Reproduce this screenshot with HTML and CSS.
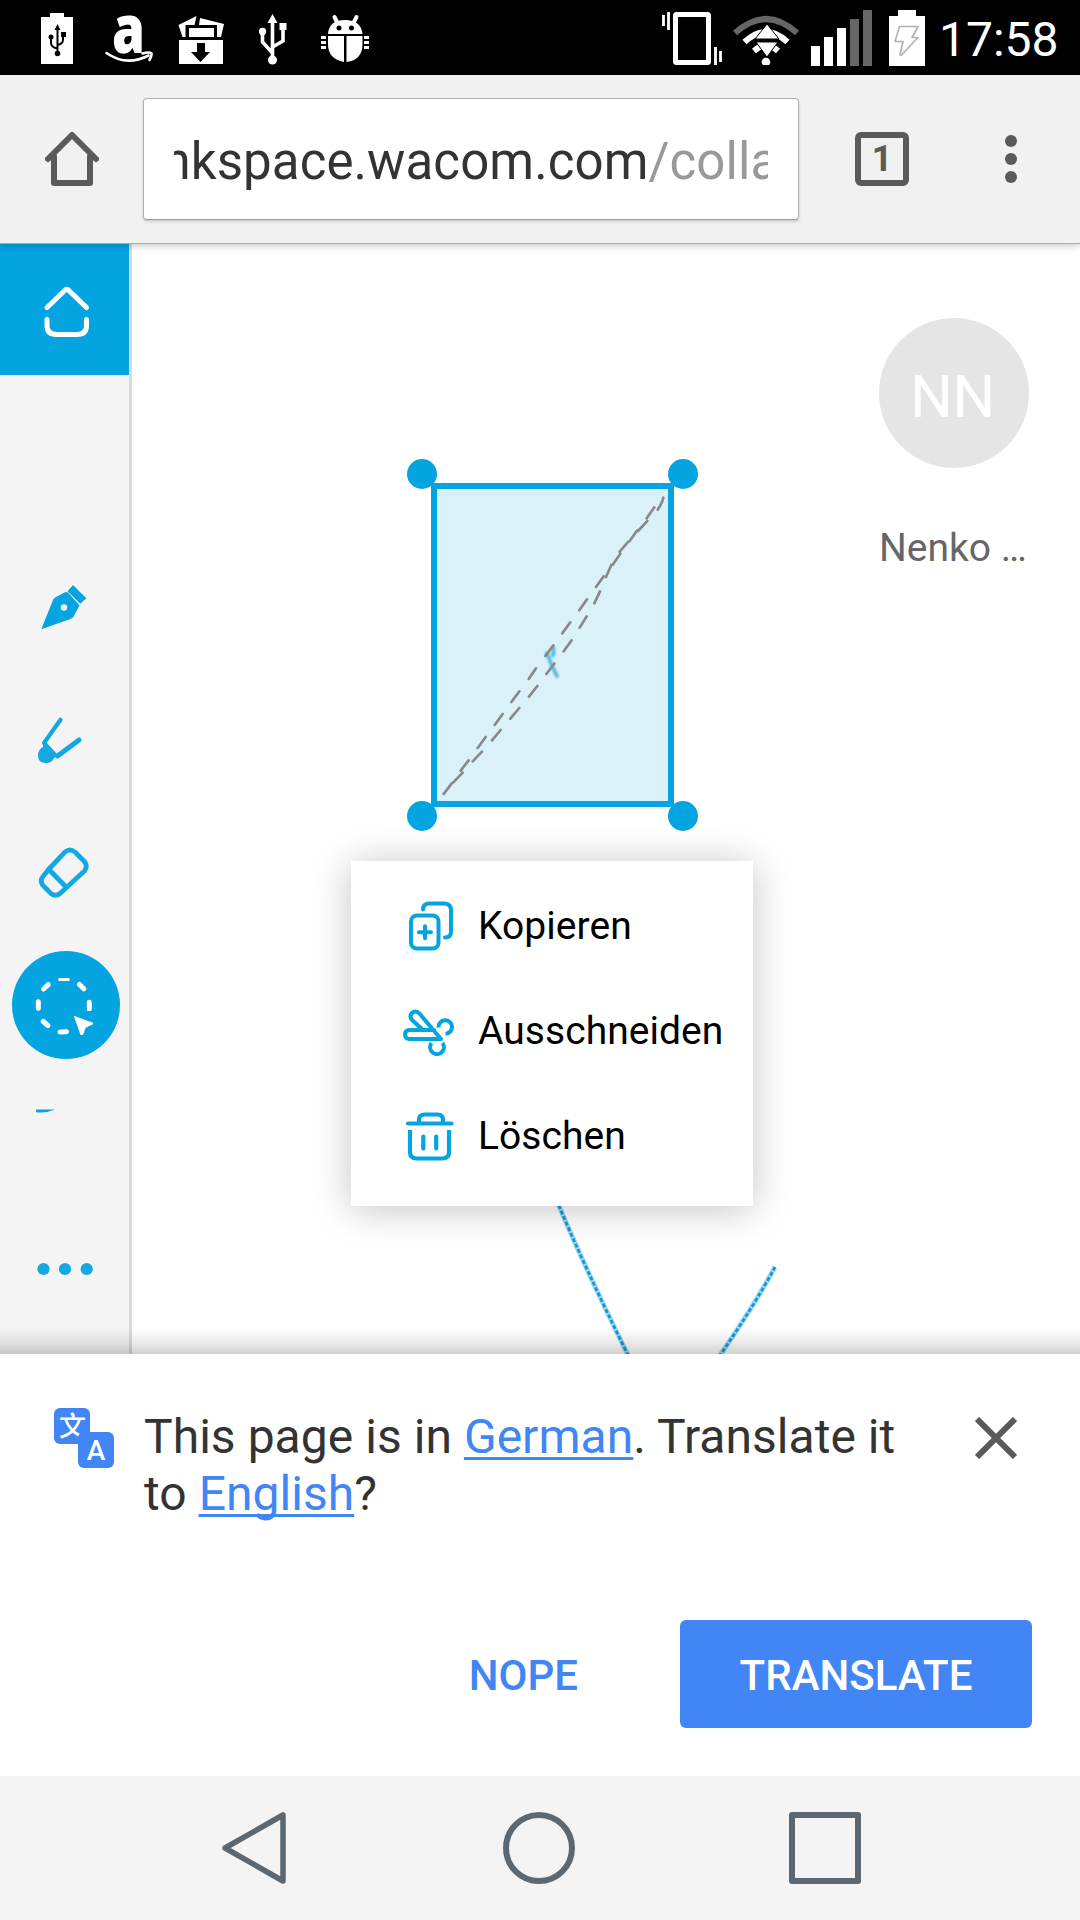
FILE: index.html
```html
<!DOCTYPE html>
<html lang="de">
<head>
<meta charset="utf-8">
<title>Inkspace</title>
<link rel="stylesheet" href="styles.css">
</head>
<body>
<header class="status">
  <div class="status-group notifications">
    <svg width="32" height="54" viewBox="41 10 32 54"><path fill="#fff" d="M41 16h9v-4h14v4h9v47H41z"/><g fill="none" stroke="#000" stroke-width="2"><path d="M57.500 28v24M51 36v6q0 4 6 5.500M63 34v5q0 4-6 5"/></g><path d="M57.500 23l3 6h-6zM61 31h5v5h-5z"/><circle cx="57.500" cy="52.500" r="2.800"/><circle cx="51" cy="36" r="2.500"/></svg>
    <svg width="48" height="54" viewBox="105 10 48 54"><text class="shop-letter" x="112" y="52" textLength="33" lengthAdjust="spacingAndGlyphs">a</text><path fill="none" stroke="#fff" stroke-width="2.600" stroke-linecap="round" d="M106.500 52q20 14 42 2.500M142.500 52.500q7-2 9 0q.5 2-2 6.500"/></svg>
    <svg width="46" height="54" viewBox="178 10 46 54"><path fill="#fff" d="M178.500 24l18-9-2 9h-9v12h-3zM200 17l24 6-3 13h-4V24h-18zM189 27h25v9h-25zM179 39h44v24h-44z"/><path d="M197 42h8v9h5l-9.500 10-9.500-10h6z"/></svg>
    <svg width="28" height="54" viewBox="259 10 28 54"><g fill="none" stroke="#fff" stroke-width="3.600"><path d="M272.500 20v38M262.500 31v10l10 11M283 25v15l-10.500 6"/></g><path fill="#fff" d="M272.500 13l5 9h-10zM279.500 22h7v7h-7z"/><circle cx="262.500" cy="30.500" r="3.700" fill="#fff"/><circle cx="272.500" cy="59" r="4.500" fill="#fff"/></svg>
    <svg width="48" height="54" viewBox="321 10 48 54"><path stroke="#fff" stroke-width="4" stroke-linecap="round" d="M334.500 16l3 6M356.500 16l-3 6"/><path fill="#fff" d="M328 33q1-14 17-14t17.500 14zM328 35h16v26q-16-3-16-18zM346.500 35h16v8q0 16-16 18zM321 35h5v3h-5zM321 40h5v3h-5zM321 45h5v3h-5zM364 35h5v3h-5zM364 40h5v3h-5zM364 45h5v3h-5z"/><circle cx="339" cy="27" r="2.500"/><circle cx="351.500" cy="27" r="2.500"/></svg>
  </div>
  <div class="status-group system">
    <svg width="60" height="54" viewBox="662 10 60 54"><rect x="675.500" y="13.500" width="33" height="48" rx="1" fill="none" stroke="#fff" stroke-width="5"/><path stroke="#fff" stroke-width="2.800" d="M663.500 14v11M668.500 11v18M715.500 46v18M720.500 50v11"/></svg>
    <svg width="68" height="54" viewBox="732 10 68 54"><g fill="none"><path stroke="#666" stroke-width="6" d="M735 32q31-28 62 0"/><path stroke="#fff" stroke-width="6" d="M744.500 41q21.500-20 43 0"/><path stroke="#fff" stroke-width="6" d="M754 50q12-11 24 0"/></g><path fill="#fff" stroke="#000" d="M767 23l12 15h-24zM756 41h22l-11 15z"/><circle cx="766" cy="61" r="4.300" fill="#fff"/></svg>
    <svg width="61" height="56" viewBox="811 9 61 56"><path fill="#fff" d="M811 45h9v20h-9zM824 36h9v29h-9zM837 27h9v38h-9z"/><path fill="#666" d="M850 18h9v47h-9zM863 9h9v56h-9z"/></svg>
    <svg width="36" height="56" viewBox="889 9 36 56"><path fill="#fff" d="M889 15h9V9h18v6h9v50h-36z"/><path fill="none" stroke="#b0b0b0" stroke-width="1.600" stroke-linejoin="round" d="M899.500 25.500h18.500l-6 11h6l-17 18-1-1 3-13h-8z"/></svg>
    <span class="clock">17:58</span>
  </div>
</header>

<nav class="toolbar">
  <svg width="54" height="54" viewBox="45 132 54 54"><g fill="none" stroke="#5a5a5a" stroke-width="6" stroke-linecap="round" stroke-linejoin="round"><path d="M48 159L72 135l24 24"/><path stroke-linecap="butt" d="M54 155v28h36v-28"/></g></svg>
  <div class="omnibox"><div class="url"><span class="url-text">inkspace.wacom.com<span class="path">/collaboration</span></span></div></div>
  <div class="tabs">1</div>
  <svg class="more" width="12" height="48" viewBox="1005 135 12 48" fill="#5a5a5a"><circle cx="1011" cy="141" r="6"/><circle cx="1011" cy="159" r="6"/><circle cx="1011" cy="177" r="6"/></svg>
</nav>

<main class="page">
  <aside class="tools">
    <svg class="tool home" viewBox="0 243 129 132"><g fill="none" stroke="#fff" stroke-width="5" stroke-linecap="round" stroke-linejoin="round"><path d="M47 307.500L65.500 289.800q1.300-1 2.600 0L86.500 307.500M47 319.500v6q0 9 9.500 9h20.500q9.500 0 9.500-9v-6"/></g></svg>
    <svg class="tool" viewBox="0 541 129 132" fill="#03a4e0"><path fill-rule="evenodd" d="M41.300 629.300L53 600q1-2 3-3l9.500-5 2.500.6 11.500 12.600-5.800 11.300q-2 2.500-7.700 4zM67.200 607.500a3.200 3.200 0 1 0-6.400 0a3.200 3.200 0 1 0 6.400 0"/><path d="M73 585l13.300 13.300-6 5.500-12.800-12.500z"/></svg>
    <svg class="tool" viewBox="0 673 129 132" fill="#14a8e2"><path fill="none" stroke="#14a8e2" stroke-width="4.200" stroke-linecap="round" d="M60.500 719.700L44 743"/><path fill="none" stroke="#14a8e2" stroke-width="5" stroke-linecap="round" d="M79 740L57.500 756"/><path d="M46 742l12 13-3.500 2.500q-2.500 5.500-8.500 5.500-8 0-8-7.500 0-6 5-8.500v-4z"/></svg>
    <svg class="tool" viewBox="0 805 129 132"><g fill="none" stroke="#14a8e2" stroke-width="4.800"><path d="M49 869L65 852q5-4 10 0l9.500 9.500q3.500 4.500 0 9.500L60 893.500q-4.500 3.500-9 0l-8-8q-3.500-5 0-9zM47 867.500l20.500 21"/></g></svg>
    <svg class="tool" viewBox="0 937 129 132"><circle cx="66" cy="1005" r="54" fill="#03a4e0"/><path fill="none" stroke="#fff" stroke-width="5" stroke-linecap="round" d="M38.300 1001.800v6.500M89.300 1002.300v6.500M60 1032l6.500-.3M79.500 984.500l4.300 4.300M43.600 989l4.600-4.300M43.300 1021.500l4.600 4"/><path stroke="#fff" stroke-width="3" d="M58.500 979.500h11"/><path fill="#fff" d="M73.700 1015.700l19.300 7v1.500l-7.300 3.500-2.700 7.200h-2.400z"/></svg>
    <svg class="tool" viewBox="0 1069 129 132"><path fill="#03a4e0" d="M36 1109.500h19q-9 4-19 2.700z"/></svg>
    <svg class="tool" viewBox="0 1201 129 132" fill="#14a8e2"><circle cx="43.500" cy="1269" r="6.100"/><circle cx="65" cy="1269" r="6.100"/><circle cx="86.700" cy="1269" r="6.100"/></svg>
  </aside>

  <section class="canvas">
    <svg class="drawing" viewBox="132 243 948 1111">
      <g fill="none">
        <path stroke="#1a9ed6" stroke-opacity=".4" stroke-width="5" d="M556.500 1200Q584 1266 628.500 1356M775 1267Q754 1306 719.500 1356"/>
        <path stroke="#0f9ad5" stroke-width="2.800" stroke-dasharray="4 2" d="M556.500 1200Q584 1266 628.500 1356M775 1267Q754 1306 719.500 1356"/>
      </g>
      <rect x="434" y="486" width="237" height="318" fill="#dbf1fa" stroke="#03a4e0" stroke-width="6"/>
      <g fill="#03a4e0"><circle cx="422" cy="474" r="15"/><circle cx="683" cy="474" r="15"/><circle cx="422" cy="816" r="15"/><circle cx="683" cy="816" r="15"/></g>
      <g transform="translate(390 440) scale(.33333)" fill="none">
        <path class="ink" d="M491 624l-2 22M470 640l7 14 8 22 7 14 9 18"/>
        <path stroke="#888" stroke-width="8" stroke-linecap="round" d="M161 1062L185 1030M212 992L236 961M263 924L287 891M314 855L338 822M364 786L388 754M416 717L438 685M466 648L490 616M517 580L541 547M568 511L591 478M618 441L641 409M668 374L691 341M719 303L742 271M770 235L793 202M190 1027L218 998M248 964L276 935M306 901L332 870M361 836L388 804M417 770L442 738M469 702L493 671M521 634L545 601M569 563L590 529M613 490L630 454M648 411L664 375M689 335L714 306M744 273L772 243M803 209Q817 188 820 173"/>
      </g>
    </svg>
    <div class="user"><div class="avatar">NN</div><div class="name">Nenko …</div></div>
    <div class="menu">
      <div class="item"><svg width="52" height="50" viewBox="403 901 52 50"><g fill="none" stroke="#03a4e0" stroke-width="4" stroke-linecap="round"><rect x="411" y="915.500" width="27.500" height="33" rx="6"/><path d="M425 932.300v-6M425 932.300v6M419 932.300h12M423 909.500q0-6 6.500-6h14.500q7 0 7 7v21q0 6-6 6"/></g></svg>Kopieren</div>
      <div class="item"><svg width="52" height="50" viewBox="403 1009 52 50"><g fill="none" stroke="#03a4e0" stroke-width="4" stroke-linecap="round" stroke-linejoin="round"><path d="M434 1033h-25q-4 .5-4 4.500t4 4.500h32L419 1016q-4-3-7 0t0 7l11 10"/><path stroke-linecap="butt" d="M438.500 1030.500a6.800 6.800 0 1 1 7 6.300M431.500 1046a6.900 6.900 0 1 0 11 0"/></g></svg>Ausschneiden</div>
      <div class="item"><svg width="52" height="50" viewBox="403 1111 52 50"><g fill="none" stroke="#03a4e0" stroke-width="4.200" stroke-linecap="round" stroke-linejoin="round"><path d="M408 1123.500h43.500M419 1122v-2q0-5.500 5.500-5.500h13q5.500 0 5.500 5.500v2M423.300 1136.500v12M436.200 1136.500v12"/><path stroke-linecap="butt" d="M410 1130v22q0 6.500 6.500 6.500h26q6.500 0 6.500-6.500v-22"/></g></svg>Löschen</div>
    </div>
  </section>
</main>

<section class="infobar">
  <div class="message">
    <svg class="translate-icon" width="60" height="60" viewBox="54 1408 60 60"><rect x="54" y="1408" width="36" height="36" rx="6" fill="#4285f4"/><text class="glyph-cjk" x="72.500" y="1436">文</text><rect x="78" y="1432" width="36" height="36" rx="6" fill="#4285f4"/><text class="glyph-latin" x="96" y="1460">A</text></svg>
    <p>This page is in <a>German</a>. Translate it to <a>English</a>?</p>
    <svg class="close" width="42" height="42" viewBox="975 1417 42 42"><path stroke="#5a5a5a" stroke-width="6" d="M977 1419l38 38M1015 1419l-38 38"/></svg>
  </div>
  <div class="actions"><span class="nope">NOPE</span><span class="translate">TRANSLATE</span></div>
</section>

<footer class="navbar">
  <svg width="66" height="74" viewBox="221 1811 66 74"><path fill="none" stroke="#5b6872" stroke-width="5.500" stroke-linejoin="round" d="M225 1848l58-33v66z"/></svg>
  <svg width="74" height="74" viewBox="502 1811 74 74"><circle cx="539" cy="1848" r="33" fill="none" stroke="#5b6872" stroke-width="6"/></svg>
  <svg width="74" height="74" viewBox="788 1811 74 74"><rect x="792" y="1815" width="66" height="66" fill="none" stroke="#5b6872" stroke-width="6" stroke-linejoin="round"/></svg>
</footer>
</body>
</html>
```

FILE: styles.css
```css
* { box-sizing: border-box; }
body { margin: 0; width: 1080px; height: 1920px; display: flex; flex-direction: column; overflow: hidden; background: #fff; font-family: Roboto, sans-serif; }
svg { display: block; flex: none; }

.status { height: 75px; flex: none; display: flex; justify-content: space-between; background: #000; color: #fff; padding: 0 21px 0 41px; }
.status-group { display: flex; align-items: center; }
.notifications { gap: 32px; padding-right: 2px; }
.notifications svg:nth-child(3) { margin-left: -7px; }
.notifications svg:nth-child(4) { margin-left: 3px; }
.notifications svg:nth-child(5) { margin-left: 2px; }
.system svg:nth-child(2) { margin-left: 10px; }
.system svg:nth-child(3) { margin-left: 11px; }
.system svg:nth-child(4) { margin-left: 17px; }
.clock { width: 120px; margin-left: 14px; font-size: 48px; line-height: 75px; padding-top: 3px; white-space: nowrap; }
.shop-letter { font: 800 68px "Open Sans", sans-serif; fill: #fff; }

.toolbar { height: 168px; flex: none; display: flex; align-items: center; background: #f1f1f1; padding-left: 45px; position: relative; z-index: 2; box-shadow: 0 1px 0 #aaa, 0 2px 8px rgba(0,0,0,.25); }
.omnibox { width: 656px; height: 122px; margin-left: 44px; background: #fff; border: 1px solid #b0b0b0; border-bottom-color: #999; border-radius: 4px; box-shadow: 0 2px 3px rgba(0,0,0,.15); padding: 0 30px; }
.url { height: 120px; overflow: hidden; display: flex; }
.url-text { font-size: 51px; line-height: 126px; white-space: nowrap; color: #333; margin-left: -24px; letter-spacing: .09px; }
.path { color: #999; }
.tabs { width: 54px; height: 54px; margin-left: 56px; border: 6px solid #5a5a5a; border-radius: 6px; color: #5a5a5a; font: 700 36px/43px Roboto, sans-serif; text-align: center; }
.more { margin-left: 96px; }

.page { height: 1111px; flex: none; display: flex; }
.tools { width: 132px; background: #f4f4f4; border-right: 3px solid #d9d9d9; display: flex; flex-direction: column; }
.tool { width: 129px; height: 132px; }
.home { background: #03a4e0; margin-bottom: 166px; }
.canvas { flex: 1; position: relative; }
.drawing { width: 948px; height: 1111px; }
.ink { stroke: #1ea5dd; stroke-width: 11; stroke-linecap: round; opacity: .75; filter: blur(3px); }
.user { position: absolute; top: 75px; right: 51px; width: 150px; }
.avatar { height: 150px; border-radius: 50%; background: #e5e5e5; color: #fff; font-size: 60px; line-height: 158px; text-align: center; padding-right: 3px; letter-spacing: -.4px; }
.name { margin-top: 57px; font-size: 39px; line-height: 46px; color: #666; white-space: nowrap; }
.menu { position: absolute; left: 219px; top: 618px; width: 402px; height: 345px; padding: 12px 0; background: #fff; box-shadow: 0 3px 36px rgba(0,0,0,.24); }
.item { height: 105px; display: flex; align-items: center; padding-left: 52px; font-size: 39px; letter-spacing: .05px; color: #000; gap: 23px; }

.infobar { height: 422px; flex: none; position: relative; background: #fff; }
.infobar::before { content: ""; position: absolute; left: 0; right: 0; bottom: 100%; height: 26px; background: linear-gradient(rgba(0,0,0,0), rgba(0,0,0,.09) 60%, rgba(0,0,0,.18)); }
.message { display: flex; padding: 54px 63px 0 54px; height: 266px; }
.message p { margin: 0 0 0 30px; width: 790px; font-size: 48px; line-height: 57px; letter-spacing: .04px; color: #333; }
.message a { color: #4285f4; text-decoration: underline; text-decoration-thickness: 3px; text-underline-offset: 4px; text-decoration-skip-ink: none; }
.close { margin: 9px 0 0 41px; }
.glyph-cjk { font: 500 27px "Noto Sans CJK SC", sans-serif; fill: #fff; text-anchor: middle; }
.glyph-latin { font: 500 28px Roboto, sans-serif; fill: #fff; text-anchor: middle; }
.actions { display: flex; justify-content: flex-end; padding-right: 48px; font-size: 42px; font-weight: 500; line-height: 111px; }
.nope { color: #4285f4; margin-right: 102px; }
.translate { width: 352px; height: 108px; background: #4285f4; color: #fff; text-align: center; border-radius: 6px; }

.navbar { height: 144px; flex: none; background: #f4f4f4; display: flex; align-items: center; padding-left: 221px; }
.navbar svg:nth-child(2) { margin-left: 215px; }
.navbar svg:nth-child(3) { margin-left: 212px; }
```
